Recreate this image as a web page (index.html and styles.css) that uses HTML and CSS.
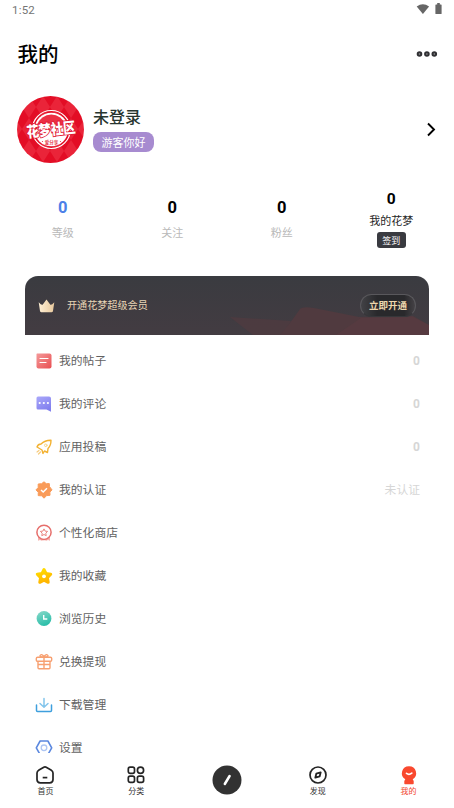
FILE: index.html
```html
<!DOCTYPE html>
<html lang="zh-CN">
<head>
<meta charset="utf-8">
<meta name="viewport" content="width=device-width, initial-scale=1">
<title>我的</title>
<link rel="stylesheet" href="styles.css">
</head>
<body>
<div class="app">
  <header class="status">
    <span class="time">1:52</span>
    <svg class="status-icons" width="28" height="14" viewBox="0 0 28 14"><path d="M.7 3.6Q6.9-1.200 13.1 3.600L6.900 11Z"/><path d="M20 1.400h1.200V0h2.600v1.400H25a.6.6 0 0 1 .6.6v8.500a.6.6 0 0 1-.6.6h-5a.6.6 0 0 1-.6-.6V2a.6.6 0 0 1 .6-.6Z"/></svg>
  </header>
  <div class="heading">
    <h1>我的</h1>
    <svg width="22" height="8" viewBox="0 0 22 8" fill="#999" stroke="#303033" stroke-width="2"><circle cx="3.5" cy="4" r="1.800"/><circle cx="10.900" cy="4" r="1.800"/><circle cx="18.300" cy="4" r="1.800"/></svg>
  </div>
  <section class="profile">
    <svg class="avatar" width="67" height="67" viewBox="0 0 67 67">
      <defs>
        <pattern id="diamonds" x="5" width="14" height="22" patternUnits="userSpaceOnUse"><path fill="#e30d25" d="M0 0h14v22H0z"/><path fill="#ea2439" d="m7 0 7 11-7 11L0 11Z"/></pattern>
      </defs>
      <circle cx="33.500" cy="33.500" r="33.500" fill="url(#diamonds)"/>
      <circle cx="34.300" cy="33.500" r="19" fill="none" stroke="#fff" stroke-width="1.200"/>
      <circle cx="34.300" cy="33.500" r="16.800" fill="#fff"/>
      <path d="M20 29a15 15 0 0 1 28.600 0Z" fill="#ec3044"/>
      <g transform="rotate(-6 34 34)"><text class="logo-name" x="34" y="39" text-anchor="middle" textLength="49" lengthAdjust="spacingAndGlyphs">花梦社区</text></g>
      <text class="logo-sub" x="34.500" y="47.500" text-anchor="middle">爱分享</text>
      <g fill="#e43b4d"><circle cx="25.500" cy="45.500" r=".6"/><circle cx="43.500" cy="45.500" r=".6"/></g>
    </svg>
    <div class="identity"><div class="name">未登录</div><span class="greeting">游客你好</span></div>
    <svg class="chevron" width="10" height="15" viewBox="0 0 10 15"><path d="m1 1.500 6 6-6 6" fill="none" stroke="#000" stroke-width="1.900"/></svg>
  </section>
  <section class="stats">
    <div class="stat level"><b>0</b><span>等级</span></div>
    <div class="stat"><b>0</b><span>关注</span></div>
    <div class="stat"><b>0</b><span>粉丝</span></div>
    <div class="stat coins"><b>0</b><span>我的花梦</span><button>签到</button></div>
  </section>
  <section class="vip">
    <svg class="vip-art" width="200" height="59" viewBox="0 0 200 59"><path d="M1 41 62 45 54 59H24Z" fill="#563b40" opacity=".55"/><path d="M51 59Q60 49 71 33q3-3 14-1l45 9 54-1 16 9v10Z" fill="#503a3f"/><path d="m107 59 25-17 52-1 16 8v10Z" fill="#613d42" opacity=".35"/></svg>
    <svg class="crown" width="17" height="14" viewBox="0 0 17 14"><defs><linearGradient id="gold"><stop stop-color="#fff0d5"/><stop offset="1" stop-color="#e8c99d"/></linearGradient></defs><path d="M.7 3.200Q4 7 5 5.200L8.500.5 12 5.200q1 1.800 4.300-2L15 12q-.2 1.200-1.500 1.200h-10Q2.200 13.200 2 12Z" fill="url(#gold)"/></svg>
    <span class="vip-title">开通花梦超级会员</span>
    <button class="vip-button">立即开通</button>
  </section>
  <main class="menu">
    <div class="row"><svg viewBox="0 0 18 18"><defs><linearGradient id="red" x2="1" y2="1"><stop stop-color="#f49a9a"/><stop offset="1" stop-color="#e94e51"/></linearGradient></defs><path d="M2 1.500h12.500q2 0 2 2v11q0 2-2 2h-11q-2 0-2-2V2Z" fill="url(#red)"/><path d="M5 6.500h8M5 10.500h6" stroke="#fff" stroke-width="1.200" stroke-linecap="round"/></svg><span>我的帖子</span><b>0</b></div>
    <div class="row"><svg viewBox="0 0 18 18"><defs><linearGradient id="violet" x2=".5" y2="1"><stop stop-color="#aaa8fa"/><stop offset="1" stop-color="#817fee"/></linearGradient></defs><path d="M3 1.500h11q2 0 2 2v13.300L11.500 14.500H3q-1.500 0-1.500-1.500V3q0-1.500 1.500-1.500Z" fill="url(#violet)"/><g fill="#fff"><circle cx="4.700" cy="8" r="1.100"/><circle cx="8.800" cy="8" r="1.100"/><circle cx="12.900" cy="8" r="1.100"/></g></svg><span>我的评论</span><b>0</b></div>
    <div class="row"><svg viewBox="0 0 18 18" fill="none" stroke="#f3b232" stroke-width="1.400" stroke-linecap="round" stroke-linejoin="round"><path d="M6 6Q10 2 16 2.200 16 7.500 13 10.500L12.500 14.500 9.500 13 8 15.500 7 12 2 9Q3 6 6 6Z"/><circle cx="10.800" cy="7.300" r="1.300" stroke="#f7d78b" stroke-width="1"/><path d="m4 12.500-2 1.500m3.500 0-2 2" stroke="#f6cb7d" stroke-width="1.200"/></svg><span>应用投稿</span><b>0</b></div>
    <div class="row"><svg viewBox="0 0 18 18"><path d="m9 .8 2.300 1.900 3-.1.200 3L17 8.900l-2.100 2.200.1 3.200-3.300.3L9 17.200l-2.400-2.400-3.400-.2.100-3.300L1 8.900l2.200-2.400V3l3.400-.3Z" fill="#f99b59" stroke="#f99b59" stroke-linejoin="round"/><path d="m6 9 2.200 2L12 7.300" fill="none" stroke="#fff" stroke-width="1.500"/></svg><span>我的认证</span><em>未认证</em></div>
    <div class="row"><svg viewBox="0 0 18 18" fill="none"><path d="M3 13v3.800l2-.7 1.700.7L9 16.100l2.300.7 1.700-.7 2 .7V13" fill="#f6b3ae"/><circle cx="9" cy="8.300" r="7.100" fill="#fff" stroke="#e66e6b" stroke-width="1.500"/><path d="m9 4.900 1.100 2.200 2.500.3-1.800 1.800.4 2.500L9 10.500l-2.200 1.200.4-2.500-1.800-1.800 2.500-.3Z" stroke="#ea8580"/></svg><span>个性化商店</span></div>
    <div class="row"><svg viewBox="0 0 18 18"><defs><linearGradient id="yellow" x2=".4" y2="1"><stop stop-color="#ffe000"/><stop offset="1" stop-color="#ffb600"/></linearGradient></defs><path d="m9 2.500 2 4 4.700.7-3.300 3.400.8 4.700L9 13.200l-4.200 2.100.8-4.700-3.300-3.400L7 6.500Z" fill="url(#yellow)" stroke="url(#yellow)" stroke-width="3" stroke-linejoin="round"/><circle cx="9" cy="9.300" r="1.900" fill="#fff"/></svg><span>我的收藏</span></div>
    <div class="row"><svg viewBox="0 0 18 18"><defs><linearGradient id="teal" x2=".4" y2="1"><stop stop-color="#8bd9ca"/><stop offset="1" stop-color="#2dbfaa"/></linearGradient></defs><circle cx="9" cy="8.500" r="7.400" fill="url(#teal)"/><path d="M8.700 5v4h3.600" fill="none" stroke="#fff" stroke-width="1.400"/></svg><span>浏览历史</span></div>
    <div class="row"><svg viewBox="0 0 18 18" fill="none" stroke="#f7a071" stroke-width="1.400" stroke-linejoin="round"><rect x="1.300" y="4.300" width="15.400" height="4" rx="1.300"/><path d="M3 8.300v6.500q0 1 1 1h10q1 0 1-1V8.300M9 4.300v11.500M9 4.300Q5 4.300 5 2.800 6 .2 9 3.500 12 .2 13 2.800q0 1.500-4 1.500M3 11.500h12"/></svg><span>兑换提现</span></div>
    <div class="row"><svg viewBox="0 0 18 18" fill="none" stroke-linecap="round" stroke-linejoin="round" stroke-width="1.500"><path d="M1.500 9v5.500q0 1 1 1h13q1 0 1-1V9" stroke="#3e9fdd"/><path d="M9 2.500v8.500M5 7.500l4 3.700 4-3.700" stroke="#83c5ec"/></svg><span>下载管理</span></div>
    <div class="row"><svg viewBox="0 0 18 18" fill="none" stroke-linejoin="round"><path d="M5.100 2h7.800l3.800 6.800-3.800 6.800H5.100L1.300 8.800Z" stroke="#5b88df" stroke-width="1.600"/><circle cx="9" cy="8.800" r="2.800" stroke="#adc5f3" stroke-width="1.300"/></svg><span>设置</span></div>
  </main>
  <nav class="tabs">
    <div class="tab"><svg viewBox="0 0 20 20" fill="none" stroke="#242424" stroke-width="1.700"><path d="M4 5.100 8.800 2.200q1.200-.7 2.400 0L16 5.100q2 1.200 2 3v6.400q0 3.300-3.300 3.300H5.300Q2 17.800 2 14.500V8.100q0-1.800 2-3Z"/><path d="M7.700 12.600h4.600"/></svg><span>首页</span></div>
    <div class="tab"><svg viewBox="0 0 20 20" fill="none" stroke="#242424" stroke-width="1.700"><rect x="2.300" y="2.200" width="6.200" height="6.200" rx="1.800"/><circle cx="14.500" cy="5.300" r="3.100"/><rect x="2.300" y="11.200" width="6.200" height="6.200" rx="1.800"/><rect x="11.400" y="11.200" width="6.200" height="6.200" rx="1.800"/></svg><span>分类</span></div>
    <div class="tab"><svg class="compose" viewBox="0 0 30 30"><circle cx="15" cy="15" r="14.500" fill="#323232"/><path d="m12.800 19 4.800-8" stroke="#fff" stroke-width="2.500" stroke-linecap="round"/></svg></div>
    <div class="tab"><svg viewBox="0 0 20 20" fill="none" stroke="#242424"><circle cx="10" cy="10" r="8" stroke-width="1.700"/><path d="m7.300 12.700 1-4 4.400-1.400-1 4Z" stroke-width="1.800" stroke-linejoin="round"/></svg><span>发现</span></div>
    <div class="tab active"><svg viewBox="0 0 20 20"><path d="M10 1.200a7 7 0 0 1 3.700 13l1 1.800v2.600q0 .6-.7.600H6q-.7 0-.7-.6V16l1-1.800A7 7 0 0 1 10 1.200Z" fill="#f9492f"/><path d="M7.500 8.400q2.500 2 5.300-.3" fill="none" stroke="#fff" stroke-width="1.700" stroke-linecap="round"/></svg><span>我的</span></div>
  </nav>
</div>
</body>
</html>
```
FILE: styles.css
```css
* { box-sizing: border-box; }
body { margin: 0; background: #fff; color: #000; font-family: "Noto Sans CJK SC", sans-serif; }
button { border: 0; padding: 0; font-family: inherit; }
.app { width: 454px; height: 808px; display: flex; flex-direction: column; overflow: hidden; }
.status { height: 20px; flex: none; display: flex; justify-content: space-between; padding: 3px 10px 0 12px; color: #757575; }
.time { font: 11.5px/15px Roboto, sans-serif; letter-spacing: .2px; }
.status-icons { fill: #666; }
.heading { height: 68px; flex: none; display: flex; align-items: center; justify-content: space-between; padding: 0 16px 0 17.5px; }
h1 { margin: 0; padding-bottom: 2px; font-size: 20.5px; line-height: 30px; font-weight: 500; }
.profile { height: 83px; flex: none; display: flex; align-items: center; padding: 0 17px; }
.avatar { flex: none; }
.logo-name { font-size: 15px; font-weight: 900; fill: #fff; stroke: #df1730; stroke-width: 1.8px; paint-order: stroke; }
.logo-sub { font-size: 4.5px; font-weight: 700; fill: #e43b4d; }
.identity { margin-left: 9px; flex: 1; }
.name { margin-top: -3px; margin-bottom: 5px; font-size: 16px; line-height: 22px; font-weight: 500; color: #27352f; }
.greeting { display: flex; width: 61px; height: 20px; align-items: center; justify-content: center; border-radius: 8px; background: #a78bd0; color: #fff; font-size: 11px; line-height: 16px; }
.stats { height: 105px; flex: none; display: grid; grid-template-columns: repeat(4, 1fr); padding: 0 8px; }
.stat { display: flex; flex-direction: column; align-items: center; padding-top: 26px; }
.stat b { font: 700 16.5px/22px Roboto, sans-serif; }
.stat span { margin-top: 5px; font-size: 11px; line-height: 16px; color: #b9b9b9; }
.stat.level b { color: #4c80e8; }
.stat.coins { padding-top: 17px; }
.stat.coins b { font-size: 15.5px; }
.stat.coins span { margin-top: 2px; color: #252525; }
.stat button { width: 29px; height: 16px; margin-top: 4px; border-radius: 3px; background: #393a40; color: #fff; font-size: 9px; line-height: 15px; }
.vip { position: relative; height: 59px; flex: none; margin: 0 25px; padding: 0 13px; display: flex; align-items: center; border-radius: 13px 13px 0 0; overflow: hidden; background: linear-gradient(#3a3b40, #433c42); }
.vip-art { position: absolute; right: 0; top: 0; }
.crown { position: relative; flex: none; }
.vip-title { position: relative; flex: 1; margin-left: 12px; padding-bottom: 2px; font-size: 10.1px; line-height: 16px; color: #e8d5b5; }
.vip-button { position: relative; width: 56px; height: 23px; border: 1px solid #59585c; border-bottom-color: #37373a; border-radius: 12px; background: linear-gradient(90deg, #424246, #29292c 30%, #29292c 80%, #454246); color: #efd7ad; font-size: 9.5px; font-weight: 700; line-height: 19px; }
.menu { flex: 1; min-height: 0; overflow: hidden; padding: 4px 34px 0 35px; }
.row { height: 43px; display: flex; align-items: center; color: #626262; font-size: 11.8px; line-height: 18px; }
.row svg { width: 18px; height: 18px; margin-right: 6px; }
.row span, .row em { padding-bottom: 1px; }
.row b, .row em { margin-left: auto; color: #d6d6d6; font-style: normal; }
.row b { font: 700 12px/18px Roboto, sans-serif; }
.tabs { height: 55px; flex: none; display: grid; grid-template-columns: repeat(5, 1fr); background: #fff; }
.tab { display: flex; flex-direction: column; align-items: center; padding-top: 12px; color: #333; }
.tab svg { width: 20px; height: 20px; }
.tab span { font-size: 8px; line-height: 12px; }
.tab .compose { width: 30px; height: 30px; }
.tab.active { color: #f1442f; }
```
